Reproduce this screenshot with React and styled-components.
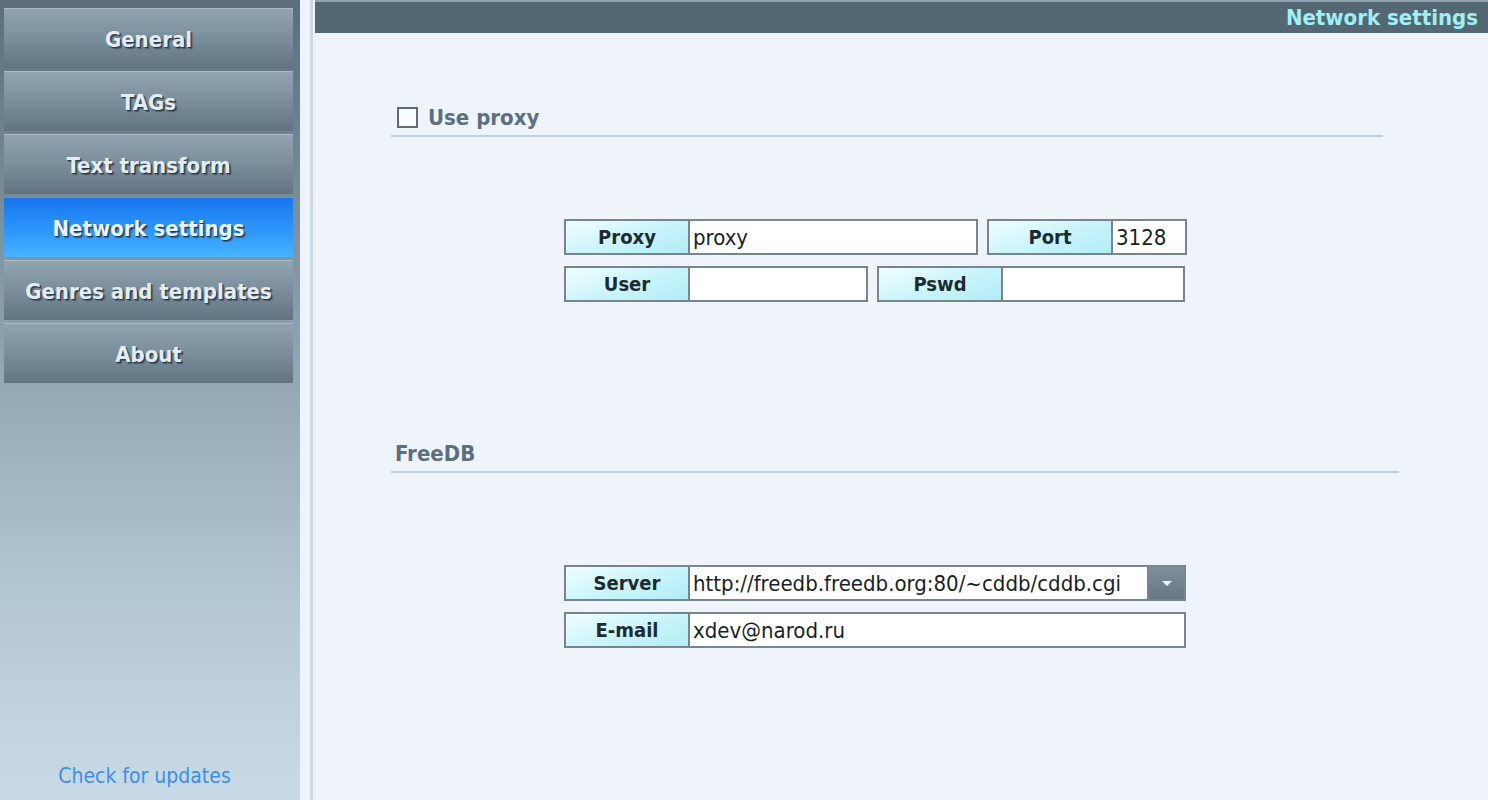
import React from 'react';
import styled, { createGlobalStyle } from 'styled-components';

const GlobalStyle = createGlobalStyle`
  html, body {
    margin: 0;
    padding: 0;
    height: 100%;
    overflow: hidden;
  }
  body {
    font-family: "DejaVu Sans Condensed", "DejaVu Sans", Tahoma, sans-serif;
    background: #eef3fb;
  }
`;

const Window = styled.div`
  display: flex;
  width: 1488px;
  height: 800px;
`;

const Sidebar = styled.aside`
  width: 300px;
  flex-shrink: 0;
  display: flex;
  flex-direction: column;
  box-sizing: border-box;
  padding: 8px 7px 12px 4px;
  gap: 3px;
  background: linear-gradient(180deg, #5b6e7b 0%, #8a9eab 40%, #b4c8d4 75%, #c8dae5 100%);
`;

const NavButton = styled.div`
  height: 60px;
  display: flex;
  align-items: center;
  justify-content: center;
  padding-top: 2px;
  box-sizing: border-box;
  font-weight: bold;
  font-size: 22px;
  color: ${({ active }) => (active ? '#e8f3ff' : '#e2ecf2')};
  text-shadow: 1px 1px 0 #2b3a44, 2px 2px 1px rgba(30, 40, 50, 0.5);
  background: ${({ active }) =>
    active
      ? 'linear-gradient(180deg, #1774ee 0%, #2a93fb 50%, #46b4ff 100%)'
      : 'linear-gradient(180deg, #90a4b1 0%, #7a8e9b 50%, #607481 100%)'};
  box-shadow: inset 0 1px 0 rgba(255, 255, 255, 0.25);
`;

const Spacer = styled.div`
  flex: 1;
`;

const UpdateLink = styled.a`
  text-align: center;
  font-size: 21px;
  color: #3d8ee6;
  text-decoration: none;
  padding-right: 8px;
`;

const Divider = styled.div`
  width: 10px;
  flex-shrink: 0;
  background: #eef3fb;
  border-right: 3px solid #cdd8e3;
`;

const Main = styled.main`
  flex: 1;
  display: flex;
  flex-direction: column;
  margin-left: 2px;
  background: #eff4fb;
`;

const Header = styled.div`
  height: 33px;
  box-sizing: border-box;
  border-top: 2px solid #8fa2ae;
  background: #536873;
  display: flex;
  align-items: center;
  justify-content: flex-end;
  padding-right: 10px;
  font-weight: bold;
  font-size: 22px;
  color: #9ff0f4;
`;

const Content = styled.div`
  padding: 66px 0 0 76px;
  display: flex;
  flex-direction: column;
`;

const Section = styled.section`
  width: ${({ width }) => width}px;
  margin-top: ${({ top }) => top || 0}px;
`;

const SectionTitle = styled.div`
  display: flex;
  align-items: center;
  gap: 10px;
  height: 38px;
  box-sizing: border-box;
  padding-left: ${({ inset }) => inset}px;
  font-weight: bold;
  font-size: 22px;
  color: #5b6f7f;
  border-bottom: 2px solid #bfd0dc;
`;

const CheckBox = styled.span`
  width: 17px;
  height: 17px;
  border: 2px solid #5f6c75;
  background: #f8fbff;
`;

const Fields = styled.div`
  display: flex;
  flex-direction: column;
  gap: 11px;
  margin: ${({ top }) => top}px 0 0 173px;
`;

const Row = styled.div`
  display: flex;
  gap: 9px;
`;

const Field = styled.div`
  display: flex;
  height: 36px;
  width: ${({ width }) => width}px;
  box-sizing: border-box;
  border: 2px solid #77858e;
  background: #fff;
`;

const Label = styled.div`
  width: 122px;
  flex-shrink: 0;
  display: flex;
  align-items: center;
  justify-content: center;
  border-right: 2px solid #77858e;
  background: linear-gradient(160deg, #f0feff 0%, #c8f4fa 55%, #b2ecf6 100%);
  font-weight: bold;
  font-size: 20px;
  color: #1e2a31;
`;

const Value = styled.div`
  flex: 1;
  display: flex;
  align-items: center;
  padding-left: 3px;
  font-size: 22px;
  color: #1a1f24;
  white-space: nowrap;
  overflow: hidden;
`;

const DropButton = styled.div`
  width: 35px;
  flex-shrink: 0;
  display: flex;
  align-items: center;
  justify-content: center;
  border-left: 2px solid #77858e;
  background: linear-gradient(180deg, #7d909c 0%, #647783 100%);
`;

const Arrow = styled.span`
  width: 0;
  height: 0;
  border-left: 5px solid transparent;
  border-right: 5px solid transparent;
  border-top: 5px solid #f2f6f8;
`;

const LabeledField = ({ label, value, width, dropdown }) => (
  <Field width={width}>
    <Label>{label}</Label>
    <Value>{value}</Value>
    {dropdown && (
      <DropButton>
        <Arrow />
      </DropButton>
    )}
  </Field>
);

const NAV = ['General', 'TAGs', 'Text transform', 'Network settings', 'Genres and templates', 'About'];

export default function App() {
  return (
    <>
      <GlobalStyle />
      <Window>
        <Sidebar>
          {NAV.map((item) => (
            <NavButton key={item} active={item === 'Network settings'}>
              {item}
            </NavButton>
          ))}
          <Spacer />
          <UpdateLink href="#">Check for updates</UpdateLink>
        </Sidebar>
        <Divider />
        <Main>
          <Header>Network settings</Header>
          <Content>
            <Section width={992}>
              <SectionTitle inset={6}>
                <CheckBox />
                Use proxy
              </SectionTitle>
            </Section>
            <Fields top={82}>
              <Row>
                <LabeledField label="Proxy" value="proxy" width={414} />
                <LabeledField label="Port" value="3128" width={200} />
              </Row>
              <Row>
                <LabeledField label="User" value="" width={304} />
                <LabeledField label="Pswd" value="" width={308} />
              </Row>
            </Fields>
            <Section width={1008} top={133}>
              <SectionTitle inset={4}>FreeDB</SectionTitle>
            </Section>
            <Fields top={92}>
              <LabeledField
                label="Server"
                value="http://freedb.freedb.org:80/~cddb/cddb.cgi"
                width={622}
                dropdown
              />
              <LabeledField label="E-mail" value="xdev@narod.ru" width={622} />
            </Fields>
          </Content>
        </Main>
      </Window>
    </>
  );
}
